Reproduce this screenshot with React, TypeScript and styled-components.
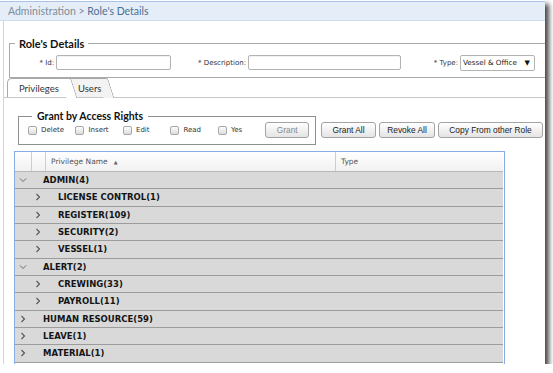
import React from "react";
import styled, { createGlobalStyle } from "styled-components";

const Global = createGlobalStyle`
  html, body { margin: 0; padding: 0; background: #fff; }
  * { box-sizing: border-box; }
`;

const Window = styled.div`
  width: 545px;
  height: 364px;
  overflow: hidden;
  background: #fff;
  box-shadow: 4px 4px 5px rgba(0, 0, 0, 0.72);
  display: flex;
  flex-direction: column;
`;

const Breadcrumb = styled.div`
  margin-top: 1px;
  height: 20px;
  flex: none;
  background: #e5eef8;
  border-top: 1px solid #a8c4e5;
  border-bottom: 1px solid #cddbeb;
  padding-left: 8px;
  display: flex;
  align-items: center;
  font-family: Lato, "Liberation Sans", sans-serif;
  font-size: 10.5px;
  color: #808c99;
  white-space: pre;
`;

const Crumb = styled.span<{ $current?: boolean }>`
  color: ${(p) => (p.$current ? "#4b6f95" : "#808c99")};
`;

const Body = styled.div`
  flex: 1;
  margin-left: 3px;
  border-left: 1px solid #d4d4d4;
  display: flex;
  flex-direction: column;
  align-items: flex-start;
  min-height: 0;
`;

const Fieldset = styled.fieldset`
  width: 545px;
  margin: 16px 0 0 5px;
  padding: 5px 0 7px 0;
  border: 1px solid #a9a9a9;
  border-radius: 0;
  min-width: 0;
`;

const Legend = styled.legend`
  margin-left: 5px;
  padding: 0 4px;
  font-family: Lato, "Liberation Sans", sans-serif;
  font-weight: 700;
  font-size: 11px;
  line-height: 13px;
  color: #111;
`;

const FieldRow = styled.div`
  display: flex;
  align-items: center;
  height: 15px;
`;

const Label = styled.label<{ $w: number }>`
  width: ${(p) => p.$w}px;
  text-align: right;
  padding-right: 2px;
  font-family: "DejaVu Sans", Verdana, sans-serif;
  font-size: 7px;
  color: #333;
  white-space: nowrap;
`;

const TextBox = styled.div<{ $w: number }>`
  width: ${(p) => p.$w}px;
  height: 15px;
  border: 1px solid #b3b3b3;
  border-radius: 2px;
  background: #fff;
  box-shadow: inset 0 1px 1px rgba(0, 0, 0, 0.06);
`;

const Select = styled.div`
  width: 75px;
  height: 16px;
  border: 1px solid #b3b3b3;
  border-radius: 2px;
  background: #fff;
  display: flex;
  align-items: center;
  justify-content: space-between;
  padding: 0 4px 0 2px;
  font-family: "DejaVu Sans", Verdana, sans-serif;
  font-size: 7.2px;
  color: #222;
  white-space: nowrap;
`;

const Caret = styled.span`
  font-size: 7px;
  color: #111;
`;

const TabStrip = styled.div`
  align-self: stretch;
  padding-left: 3px;
  height: 20px;
  display: flex;
  align-items: flex-end;
  border-bottom: 1px solid #c8c8c8;
`;

const Tab = styled.div<{ $active?: boolean; $w: number }>`
  position: relative;
  width: ${(p) => p.$w}px;
  height: 19px;
  margin-right: ${(p) => (p.$active ? 3 : 0)}px;
  padding-left: ${(p) => (p.$active ? 11 : 8)}px;
  display: flex;
  align-items: center;
  font-family: Lato, "Liberation Sans", sans-serif;
  font-size: 9.5px;
  color: #333;
  background: ${(p) => (p.$active ? "#fff" : "#f3f3f3")};
  border-top: 1px solid #a9a9a9;
  border-left: 1px solid #a9a9a9;
  border-top-left-radius: ${(p) => (p.$active ? 5 : 0)}px;
  z-index: ${(p) => (p.$active ? 2 : 1)};
  &::after {
    content: "";
    position: absolute;
    top: -1px;
    right: -5px;
    width: 10px;
    height: 19px;
    background: inherit;
    border-top: 1px solid #a9a9a9;
    border-right: 1px solid #a9a9a9;
    border-top-right-radius: 2px;
    transform: skewX(18deg);
    transform-origin: top left;
    z-index: -1;
  }
`;

const TabLabel = styled.span`
  position: relative;
  z-index: 3;
`;

const Panel = styled.div`
  align-self: stretch;
  padding: 12px 0 0 10px;
  display: flex;
  flex-direction: column;
  min-height: 0;
  flex: 1;
`;

const ToolRow = styled.div`
  display: flex;
  align-items: flex-start;
  margin-left: 4px;
`;

const GrantSet = styled.fieldset`
  width: 298px;
  margin: 0;
  padding: 0 6px 6px 9px;
  border: 1px solid #8f8f8f;
  min-width: 0;
`;

const GrantLegend = styled.legend`
  margin-left: 4px;
  padding: 0 5px;
  font-family: Lato, "Liberation Sans", sans-serif;
  font-weight: 700;
  font-size: 10.5px;
  line-height: 12px;
  color: #111;
`;

const GrantBody = styled.div`
  display: flex;
  align-items: center;
  height: 16px;
`;

const CheckItem = styled.label`
  width: 48px;
  display: flex;
  align-items: center;
  gap: 4px;
  font-family: "DejaVu Sans", Verdana, sans-serif;
  font-size: 7px;
  color: #333;
`;

const Box = styled.span`
  width: 9px;
  height: 9px;
  border: 1px solid #a8a8a8;
  border-radius: 2px;
  background: linear-gradient(#fdfdfd, #dcdcdc);
`;

const Button = styled.div<{ $w: number; $disabled?: boolean }>`
  width: ${(p) => p.$w}px;
  height: 16px;
  border: 1px solid #a3a3a3;
  border-radius: 3px;
  background: linear-gradient(#ffffff, #e4e4e4);
  display: flex;
  align-items: center;
  justify-content: center;
  font-family: "Liberation Sans", Arial, sans-serif;
  font-size: 8.4px;
  color: ${(p) => (p.$disabled ? "#8a8a8a" : "#222")};
  white-space: nowrap;
`;

const GrantButton = styled(Button)`
  margin-left: auto;
`;

const Actions = styled.div`
  display: flex;
  gap: 3px;
  margin: 12px 0 0 5px;
`;

const Grid = styled.div`
  margin-top: 6px;
  width: 491px;
  flex: 1;
  border: 1px solid #86aee6;
  border-bottom: none;
  padding-right: 1px;
  display: flex;
  flex-direction: column;
`;

const HeadRow = styled.div`
  height: 20px;
  display: grid;
  grid-template-columns: 17px 14px 290px 1fr;
  background: linear-gradient(#ffffff, #f1f1f1);
  border-bottom: 1px solid #b8b8b8;
  flex: none;
`;

const HeadCell = styled.div`
  border-right: 1px solid #cdcdcd;
  display: flex;
  align-items: center;
  padding-left: 5px;
  font-family: "DejaVu Sans", Verdana, sans-serif;
  font-size: 7.5px;
  color: #555;
  gap: 6px;
  &:last-child { border-right: none; }
`;

const SortMark = styled.span`
  font-size: 5px;
  color: #666;
`;

const Rows = styled.div`
  display: flex;
  flex-direction: column;
`;

const Row = styled.div`
  height: 17.33px;
  display: flex;
  align-items: center;
  background: #d9d9d9;
  border-bottom: 1px solid #9c9c9c;
`;

const Indent = styled.span<{ $level: number }>`
  width: ${(p) => p.$level * 15}px;
  flex: none;
`;

const Toggle = styled.span`
  width: 16px;
  flex: none;
  display: flex;
  justify-content: center;
  align-items: center;
`;

const RowText = styled.span`
  margin-left: 12px;
  font-family: "DejaVu Sans", Verdana, sans-serif;
  font-weight: 700;
  font-size: 8.5px;
  color: #141414;
  white-space: nowrap;
`;

const Chevron = ({ open }: { open: boolean }) => (
  <svg width="8" height="8" viewBox="0 0 8 8">
    {open ? (
      <polyline points="1,2.5 4,5.5 7,2.5" fill="none" stroke="#6b6b6b" strokeWidth="1" />
    ) : (
      <polyline points="2.5,1 5.5,4 2.5,7" fill="none" stroke="#555" strokeWidth="1.1" />
    )}
  </svg>
);

const rows: { level: number; open: boolean; name: string }[] = [
  { level: 0, open: true, name: "ADMIN(4)" },
  { level: 1, open: false, name: "LICENSE CONTROL(1)" },
  { level: 1, open: false, name: "REGISTER(109)" },
  { level: 1, open: false, name: "SECURITY(2)" },
  { level: 1, open: false, name: "VESSEL(1)" },
  { level: 0, open: true, name: "ALERT(2)" },
  { level: 1, open: false, name: "CREWING(33)" },
  { level: 1, open: false, name: "PAYROLL(11)" },
  { level: 0, open: false, name: "HUMAN RESOURCE(59)" },
  { level: 0, open: false, name: "LEAVE(1)" },
  { level: 0, open: false, name: "MATERIAL(1)" },
];

const rights = ["Delete", "Insert", "Edit", "Read", "Yes"];

export default function App() {
  return (
    <Window>
      <Global />
      <Breadcrumb>
        <Crumb>Administration &gt; </Crumb>
        <Crumb $current>Role's Details</Crumb>
      </Breadcrumb>
      <Body>
        <Fieldset>
          <Legend>Role's Details</Legend>
          <FieldRow>
            <Label $w={46}>* Id:</Label>
            <TextBox $w={115} />
            <Label $w={77}>* Description:</Label>
            <TextBox $w={153} />
            <Label $w={59}>* Type:</Label>
            <Select>
              <span>Vessel &amp; Office</span>
              <Caret>▼</Caret>
            </Select>
          </FieldRow>
        </Fieldset>
        <TabStrip>
          <Tab $active $w={59}>
            <TabLabel>Privileges</TabLabel>
          </Tab>
          <Tab $w={34}>
            <TabLabel>Users</TabLabel>
          </Tab>
        </TabStrip>
        <Panel>
          <ToolRow>
            <GrantSet>
              <GrantLegend>Grant by Access Rights</GrantLegend>
              <GrantBody>
                {rights.map((r) => (
                  <CheckItem key={r}>
                    <Box />
                    {r}
                  </CheckItem>
                ))}
                <GrantButton $w={44} $disabled>
                  Grant
                </GrantButton>
              </GrantBody>
            </GrantSet>
            <Actions>
              <Button $w={55}>Grant All</Button>
              <Button $w={56}>Revoke All</Button>
              <Button $w={105}>Copy From other Role</Button>
            </Actions>
          </ToolRow>
          <Grid>
            <HeadRow>
              <HeadCell />
              <HeadCell />
              <HeadCell>
                Privilege Name <SortMark>▲</SortMark>
              </HeadCell>
              <HeadCell>Type</HeadCell>
            </HeadRow>
            <Rows>
              {rows.map((r) => (
                <Row key={r.name}>
                  <Indent $level={r.level} />
                  <Toggle>
                    <Chevron open={r.open} />
                  </Toggle>
                  <RowText>{r.name}</RowText>
                </Row>
              ))}
            </Rows>
          </Grid>
        </Panel>
      </Body>
    </Window>
  );
}
